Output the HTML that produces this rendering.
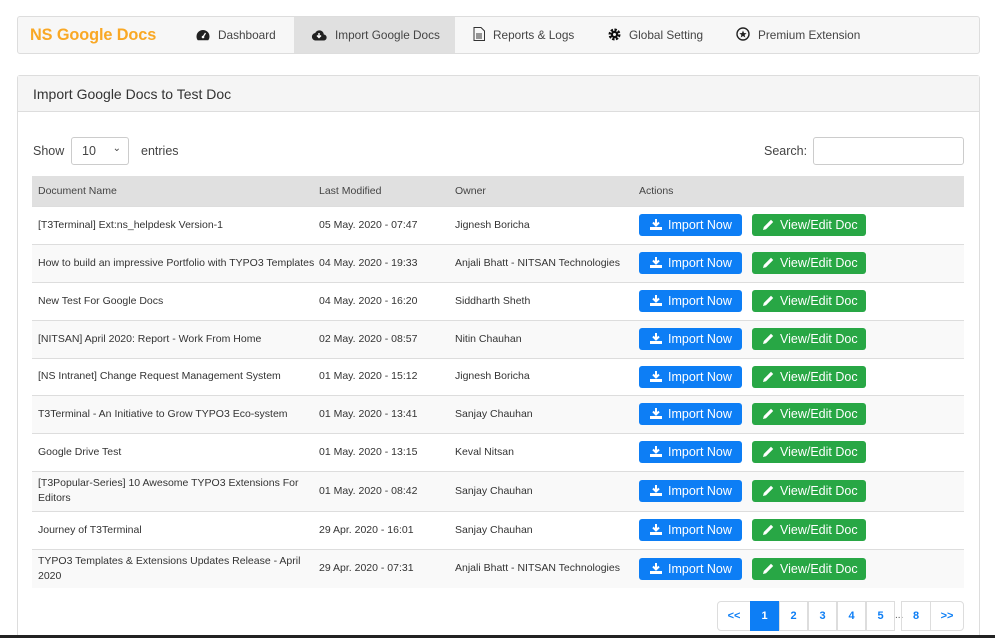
<!DOCTYPE html>
<html><head><meta charset="utf-8"><style>
*{box-sizing:border-box;margin:0;padding:0}
html,body{width:995px;height:638px;overflow:hidden}
body{background:#fff;font-family:"Liberation Sans",sans-serif;color:#333;position:relative}
.nav{position:absolute;left:17px;top:16px;width:963px;height:38px;background:#f7f7f7;border:1px solid #ddd;border-radius:3px}
.brand{position:absolute;left:12px;top:9px;font-size:16.3px;font-weight:bold;color:#f9a825;letter-spacing:-0.1px}
.ni{position:absolute;top:0;height:36px;line-height:36px;font-size:11.8px;color:#444}
.ni svg{vertical-align:-2px;margin-right:8px}
.act{background:#e0e0e0}
.panel{position:absolute;left:17px;top:75px;width:963px;height:580px;border:1px solid #ddd;border-radius:3px}
.ph{height:36px;background:#f5f5f5;border-bottom:1px solid #ddd;padding:10px 15px;font-size:14px;color:#333}
.lbl{position:absolute;font-size:12.5px;color:#444}
.sel{position:absolute;left:71px;top:137px;width:58px;height:28px;border:1px solid #ccc;border-radius:3px;font-size:12.5px;padding:6px 10px;color:#444}
.srch{position:absolute;left:813px;top:137px;width:151px;height:28px;border:1px solid #ccc;border-radius:3px}
table{position:absolute;left:32px;top:176px;width:932px;border-collapse:collapse;font-size:10.5px;color:#333;table-layout:fixed}
th{background:#e0e0e0;font-weight:normal;text-align:left;height:30px;padding:0 6px;color:#444}
td{padding:0 6px;border-top:1px solid #ddd;line-height:15px;white-space:nowrap}
tr:nth-child(odd) td{background:#f9f9f9}
.b{display:inline-block;height:22px;line-height:22px;border-radius:3px;color:#fff;font-size:12.5px;padding-left:11px}
.bi{background:#0d7ef5;width:103px}
.bv{background:#28a745;width:114px;margin-left:10px}
.b svg{vertical-align:-1px;margin-right:6px}
.pg{position:absolute;top:601px;height:30px;border:1px solid #ddd;font-size:11px;font-weight:bold;color:#0d7ef5;text-align:center;line-height:28px}
.bot{position:absolute;left:0;top:635px;width:995px;height:3px;background:#222}
</style></head><body>
<div class="nav">
<div class="brand">NS Google Docs</div>
<div class="ni" style="left:178px"><svg width="14" height="12" viewBox="0 0 14 12"><path d="M7 1A6.5 6.5 0 0 0 .5 7.5c0 1.5.5 2.8 1.3 3.8h10.4c.8-1 1.3-2.3 1.3-3.8A6.5 6.5 0 0 0 7 1z" fill="#222"/><circle cx="7" cy="8" r="1.3" fill="#fff"/><path d="M7 8L9.5 4" stroke="#fff" stroke-width="1.2"/></svg>Dashboard</div>
<div class="ni act" style="left:276px;width:161px;padding-left:17px"><svg width="16" height="12" viewBox="0 0 16 12"><path d="M4 11.5h8.5a3 3 0 0 0 .3-6A4.5 4.5 0 0 0 4.2 4 3.8 3.8 0 0 0 4 11.5z" fill="#222"/><path d="M8 4v4M6 6.5L8 8.5 10 6.5" stroke="#fff" stroke-width="1.4" fill="none"/></svg>Import Google Docs</div>
<div class="ni" style="left:455px"><svg width="12" height="14" viewBox="0 0 12 14"><path d="M1 .5h7l3.5 3.5v9.5H1z" fill="none" stroke="#333"/><path d="M3 7h6M3 9h6M3 11h6" stroke="#333"/></svg>Reports &amp; Logs</div>
<div class="ni" style="left:590px"><svg width="13" height="13" viewBox="0 0 13 13"><circle cx="6.5" cy="6.5" r="4.5" fill="none" stroke="#111" stroke-width="3" stroke-dasharray="2.2 1.3"/><circle cx="6.5" cy="6.5" r="3.6" fill="#111"/><circle cx="6.5" cy="6.5" r="1.5" fill="#f7f7f7"/></svg>Global Setting</div>
<div class="ni" style="left:718px"><svg width="14" height="14" viewBox="0 0 14 14"><circle cx="7" cy="7" r="6" fill="none" stroke="#222" stroke-width="1.4"/><path d="M7 3.5l1 2.5 2.6.2-2 1.7.7 2.6L7 9 4.7 10.5l.7-2.6-2-1.7L6 6z" fill="#222"/></svg>Premium Extension</div>
</div>
<div class="panel"><div class="ph">Import Google Docs to Test Doc</div></div>
<div class="lbl" style="left:33px;top:144px">Show</div>
<div class="sel">10<span style="position:absolute;right:7px;top:5px;font-size:10px">&#8964;</span></div>
<div class="lbl" style="left:141px;top:144px">entries</div>
<div class="lbl" style="left:764px;top:144px">Search:</div>
<div class="srch"></div>
<table>
<tr><th style="width:281px">Document Name</th><th style="width:136px">Last Modified</th><th style="width:184px">Owner</th><th>Actions</th></tr>
<tr style="height:38px"><td>[T3Terminal] Ext:ns_helpdesk Version-1</td><td>05 May. 2020 - 07:47</td><td>Jignesh Boricha</td><td>BTN</td></tr>
<tr style="height:38px"><td>How to build an impressive Portfolio with TYPO3 Templates</td><td>04 May. 2020 - 19:33</td><td>Anjali Bhatt - NITSAN Technologies</td><td>BTN</td></tr>
<tr style="height:38px"><td>New Test For Google Docs</td><td>04 May. 2020 - 16:20</td><td>Siddharth Sheth</td><td>BTN</td></tr>
<tr style="height:38px"><td>[NITSAN] April 2020: Report - Work From Home</td><td>02 May. 2020 - 08:57</td><td>Nitin Chauhan</td><td>BTN</td></tr>
<tr style="height:37px"><td>[NS Intranet] Change Request Management System</td><td>01 May. 2020 - 15:12</td><td>Jignesh Boricha</td><td>BTN</td></tr>
<tr style="height:38px"><td>T3Terminal - An Initiative to Grow TYPO3 Eco-system</td><td>01 May. 2020 - 13:41</td><td>Sanjay Chauhan</td><td>BTN</td></tr>
<tr style="height:38px"><td>Google Drive Test</td><td>01 May. 2020 - 13:15</td><td>Keval Nitsan</td><td>BTN</td></tr>
<tr style="height:40px"><td>[T3Popular-Series] 10 Awesome TYPO3 Extensions For<br>Editors</td><td>01 May. 2020 - 08:42</td><td>Sanjay Chauhan</td><td>BTN</td></tr>
<tr style="height:38px"><td>Journey of T3Terminal</td><td>29 Apr. 2020 - 16:01</td><td>Sanjay Chauhan</td><td>BTN</td></tr>
<tr style="height:39px"><td>TYPO3 Templates &amp; Extensions Updates Release - April<br>2020</td><td>29 Apr. 2020 - 07:31</td><td>Anjali Bhatt - NITSAN Technologies</td><td>BTN</td></tr>
</table>
<div class="pg" style="left:717px;width:34px;border-radius:4px 0 0 4px">&lt;&lt;</div>
<div class="pg" style="left:750px;width:29px;background:#0d7ef5;color:#fff;border-color:#0d7ef5">1</div>
<div class="pg" style="left:779px;width:29px">2</div>
<div class="pg" style="left:808px;width:29px">3</div>
<div class="pg" style="left:837px;width:29px">4</div>
<div class="pg" style="left:866px;width:29px">5</div>
<div style="position:absolute;left:895px;top:610px;font-size:10px;color:#555">...</div>
<div class="pg" style="left:901px;width:30px">8</div>
<div class="pg" style="left:930px;width:34px;border-radius:0 4px 4px 0">&gt;&gt;</div>
<div class="bot"></div>
<script>
var bi='<span class="b bi"><svg width="12" height="11" viewBox="0 0 12 11"><path d="M6 0v6M3 3.5L6 6.5 9 3.5" stroke="#fff" stroke-width="2" fill="none"/><path d="M0 8h12v3H0z" fill="#fff"/></svg>Import Now</span><span class="b bv"><svg width="11" height="11" viewBox="0 0 11 11"><path d="M0 11l.8-3L8 .8 10.2 3 3 10.2z" fill="#fff"/></svg>View/Edit Doc</span>';
document.querySelectorAll('td').forEach(function(t){if(t.textContent=='BTN')t.innerHTML=bi;});
</script>
</body></html>
